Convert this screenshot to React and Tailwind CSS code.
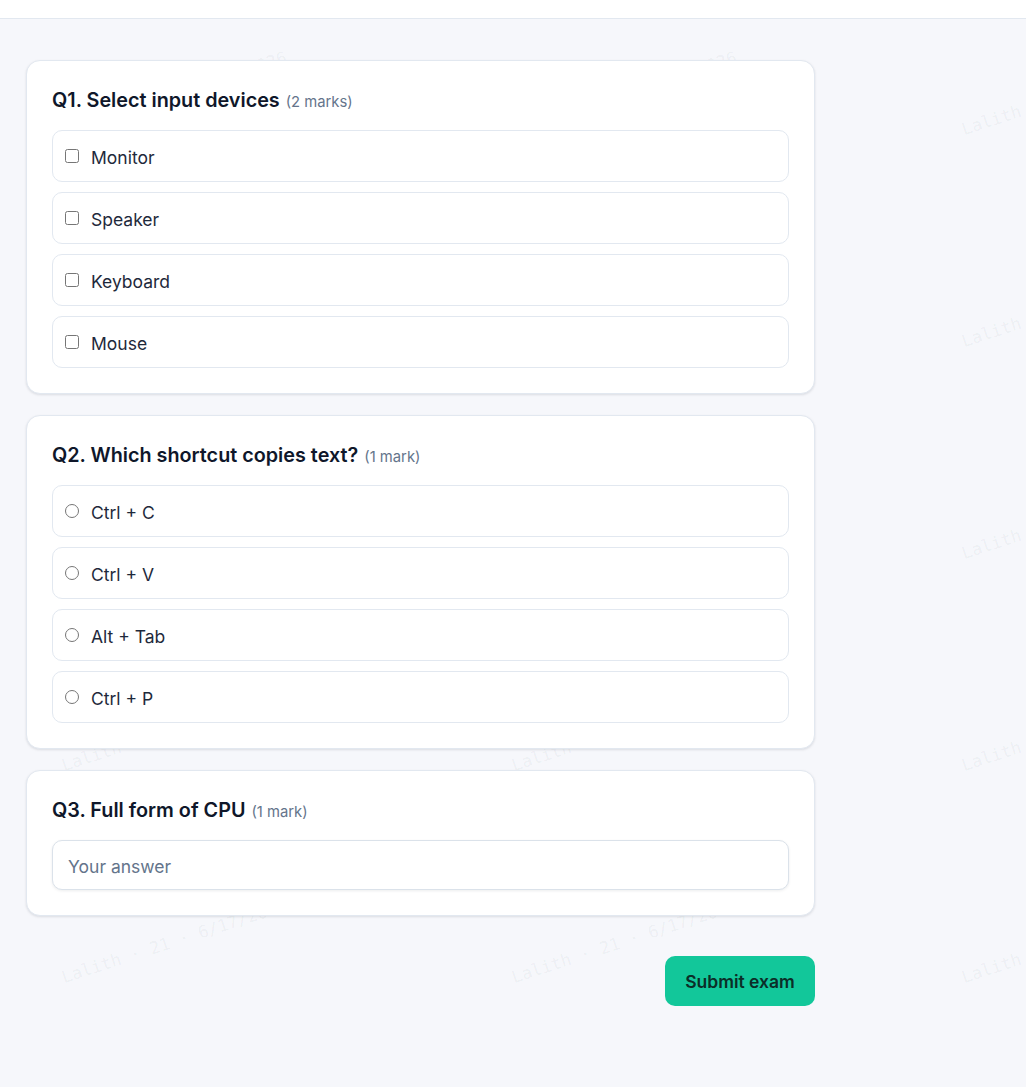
import React from "react";

const questions = [
  {
    id: 1,
    title: "Q1. Select input devices",
    marks: "(2 marks)",
    type: "checkbox",
    options: ["Monitor", "Speaker", "Keyboard", "Mouse"],
  },
  {
    id: 2,
    title: "Q2. Which shortcut copies text?",
    marks: "(1 mark)",
    type: "radio",
    options: ["Ctrl + C", "Ctrl + V", "Alt + Tab", "Ctrl + P"],
  },
  {
    id: 3,
    title: "Q3. Full form of CPU",
    marks: "(1 mark)",
    type: "text",
  },
];

const wmCols = [64, 514, 964];
const wmRows = [135, 347, 559, 771, 983];

function Watermark() {
  const marks = [];
  wmRows.forEach((y) => wmCols.forEach((x) => marks.push({ x, y })));
  return (
    <div className="pointer-events-none absolute inset-0 z-0 overflow-hidden">
      {marks.map((m, i) => (
        <span
          key={i}
          className="absolute origin-bottom-left -rotate-[18deg] whitespace-pre text-[17px] leading-[17px] text-[rgba(15,23,42,0.055)] [font-family:'DejaVu_Sans_Mono',monospace]"
          style={{ left: m.x + 1, top: m.y - 14 }}
        >
          Lalith · 21 · 6/17/2026
        </span>
      ))}
    </div>
  );
}

function Question({ q }) {
  return (
    <div className="w-[789px] rounded-[14px] border border-[#e2e8f0] bg-white p-[25px] shadow-[0_1px_3px_rgba(15,23,42,0.08),0_1px_2px_rgba(15,23,42,0.04)]">
      <div className="flex h-[28px] items-baseline leading-[28px]">
        <span className="text-[19.8px] font-semibold text-[#0f172a]">{q.title}</span>
        <span className="ml-[6px] text-[14.8px] text-[#64748b]">{q.marks}</span>
      </div>
      {q.type === "text" ? (
        <input
          type="text"
          placeholder="Your answer"
          className="mt-4 block h-[50px] w-full rounded-[10px] border border-[#dbe2ea] bg-white px-[15px] pt-[2px] text-[17.5px] text-[#0f172a] shadow-[0_1px_3px_rgba(15,23,42,0.08)] outline-none placeholder:text-[#64748b]"
        />
      ) : (
        <div className="mt-4 flex flex-col gap-[10px]">
          {q.options.map((opt) => (
            <label
              key={opt}
              className="flex h-[52px] items-center gap-3 rounded-[10px] border border-[#e2e8f0] bg-white pl-[12px] text-[17.5px] text-[#1e293b]"
            >
              <input
                type={q.type}
                name={`q${q.id}`}
                className="-mt-[1px] h-[14px] w-[14px] shrink-0"
              />
              <span className="pt-[4px]">{opt}</span>
            </label>
          ))}
        </div>
      )}
    </div>
  );
}

export default function App() {
  return (
    <div className="relative min-h-[1087px] bg-[#f6f7fb] [font-family:Inter,'Noto_Sans',sans-serif]">
      <Watermark />
      <div className="relative z-10 box-content h-[18px] border-b border-[#e2e8f0] bg-white" />
      <main className="relative z-10 pb-10 pl-[26px] pt-[41px]">
        <div className="flex w-[789px] flex-col gap-[21px]">
          {questions.map((q) => (
            <Question key={q.id} q={q} />
          ))}
        </div>
        <div className="mt-10 flex w-[789px] justify-end">
          <button className="h-[50px] w-[150px] rounded-[10px] bg-[#12c79a] pt-[2px] text-[17.5px] font-semibold text-[#0b2e28]">
            Submit exam
          </button>
        </div>
      </main>
    </div>
  );
}
